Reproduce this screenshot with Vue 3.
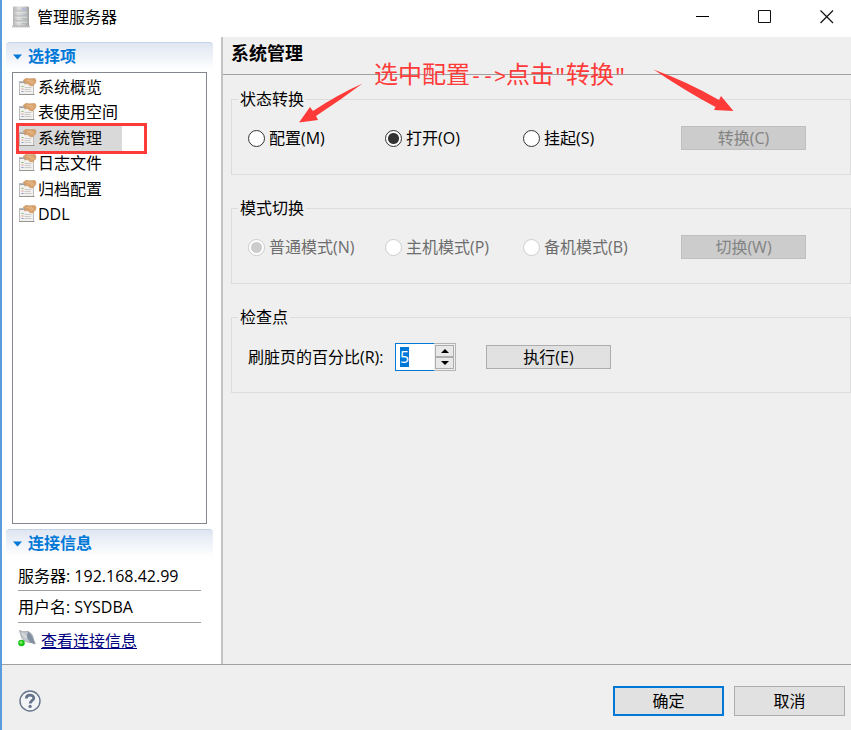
<script setup>
import { onMounted, ref } from 'vue'

const items = ['系统概览', '表使用空间', '系统管理', '日志文件', '归档配置', 'DDL']
const current = ref('系统管理')
const state = ref('O')
const mode = ref('N')
const percent = ref(5)
const percentInput = ref(null)

const states = [
  { key: 'M', label: '配置(M)' },
  { key: 'O', label: '打开(O)' },
  { key: 'S', label: '挂起(S)' }
]
const modes = [
  { key: 'N', label: '普通模式(N)' },
  { key: 'P', label: '主机模式(P)' },
  { key: 'B', label: '备机模式(B)' }
]

function step(delta) {
  percent.value = Math.min(100, Math.max(0, Number(percent.value) + delta))
}

onMounted(() => percentInput.value.select())
</script>

<template>
  <div class="window">
    <header class="titlebar">
      <svg class="app-icon" width="18" height="22" viewBox="0 0 18 22">
        <defs>
          <linearGradient id="metal" x1="0" x2="1">
            <stop offset="0" stop-color="#b4b4b4" />
            <stop offset="0.35" stop-color="#dedede" />
            <stop offset="0.7" stop-color="#c4c6cc" />
            <stop offset="1" stop-color="#a2a2a2" />
          </linearGradient>
        </defs>
        <path d="M0 19.500h18v2H0z" fill="#c9c9c9" />
        <rect x="1" y="0.500" width="16" height="20" rx="1" fill="url(#metal)" />
        <path d="M3 6h12M3 11h12M3 16h12" stroke="#eeeeee" />
        <path d="M3 5h12M3 10h12M3 15h12M3 20h12" stroke="#b2b2b2" />
        <path d="M10 2.500h4M10 3.500h4" stroke="#b9bbd6" />
        <path d="M10 12.500h4M10 17.500h4" stroke="#a9c2a6" />
      </svg>
      <h1>管理服务器</h1>
      <div class="window-buttons">
        <button type="button" aria-label="最小化">
          <svg width="14" height="14" viewBox="0 0 14 14"><path d="M0 6.500h13" stroke="#000" /></svg>
        </button>
        <button type="button" aria-label="最大化">
          <svg width="14" height="14" viewBox="0 0 14 14"><path d="M.5.5h12v12H.5z" fill="none" stroke="#111" /></svg>
        </button>
        <button type="button" aria-label="关闭">
          <svg width="14" height="14" viewBox="0 0 14 14"><path d="M.5.500l12.500 12.500M13 .500L.500 13" stroke="#111" stroke-width="1.200" /></svg>
        </button>
      </div>
    </header>

    <div class="body">
      <aside class="sidebar">
        <h2 class="section-title">
          <svg width="10" height="6" viewBox="0 0 10 6"><path d="M0 .500h9L4.500 5.500z" fill="#0078d7" /></svg>
          <span>选择项</span>
        </h2>
        <nav class="tree">
          <ul>
            <li v-for="item in items" :key="item">
              <button type="button" class="tree-item" :class="{ selected: item === current }" @click="current = item">
                <svg width="18" height="18" viewBox="0 0 18 18">
                  <rect x=".5" y="3.500" width="14" height="13" fill="#f2f1ef" stroke="#bebcb8" />
                  <path d="M0 16.500h15.500" stroke="#979592" />
                  <path d="M1 4.500h5" stroke="#9aa0a8" />
                  <path d="M5.500 9.500h7M5.500 11.500h6M5.500 13.500h7" stroke="#cbcbcb" />
                  <path d="M2.500 8.500h2" stroke="#7fbb70" />
                  <path d="M2.500 11h2" stroke="#dc9085" />
                  <path d="M2.500 13.500h2" stroke="#8296cc" />
                  <path d="M4 2.500L7 .3 10 .8 16 .4 17 2.500 16.500 5 13.500 8 11 7.500 8.500 5.500 5.500 6 6.500 4z" fill="#d9a26c" stroke="#c08b55" stroke-width=".5" />
                  <path d="M8 2.200l3 1 2.500 2.800M11 1.800l3 2 1 1.500" stroke="#ebc496" stroke-width=".8" fill="none" />
                </svg>
                <span>{{ item }}</span>
              </button>
              <span v-if="item === '系统管理'" class="marker"></span>
            </li>
          </ul>
        </nav>

        <h2 class="section-title">
          <svg width="10" height="6" viewBox="0 0 10 6"><path d="M0 .500h9L4.500 5.500z" fill="#0078d7" /></svg>
          <span>连接信息</span>
        </h2>
        <div class="connection">
          <p>服务器: 192.168.42.99</p>
          <p>用户名: SYSDBA</p>
          <a href="#">
            <svg width="18" height="18" viewBox="0 0 18 18">
              <path d="M1.500 .500L5 1.800 10 1.500C13 2.500 15 5.500 15.500 9L17.300 14 13 12.500C8.500 12.500 4 10 3 5.500z" fill="#c3c9cf" stroke="#8f979f" stroke-width=".7" />
              <path d="M9 5c0 3 1 5 3 7.300l5 1.700-1.800-5C14.500 6 12.500 3 10 1.800z" fill="#8390a0" />
              <path d="M4 3.500l4.500 4" stroke="#eef0f2" />
              <circle cx="3.500" cy="13" r="3.300" fill="#19c414" />
              <circle cx="3" cy="12.500" r="1.400" fill="#7cf06b" />
            </svg>
            <span>查看连接信息</span>
          </a>
        </div>
      </aside>

      <main class="content">
        <h2 class="page-title">系统管理</h2>
        <form class="groups" @submit.prevent>
          <fieldset>
            <legend>状态转换</legend>
            <div class="options">
              <label v-for="s in states" :key="s.key">
                <input v-model="state" type="radio" name="state" :value="s.key" />{{ s.label }}
              </label>
              <button type="button" class="btn" disabled>转换(C)</button>
            </div>
          </fieldset>
          <fieldset>
            <legend>模式切换</legend>
            <div class="options">
              <label v-for="m in modes" :key="m.key" class="off">
                <input v-model="mode" type="radio" name="mode" :value="m.key" disabled />{{ m.label }}
              </label>
              <button type="button" class="btn" disabled>切换(W)</button>
            </div>
          </fieldset>
          <fieldset>
            <legend>检查点</legend>
            <div class="checkpoint">
              <label for="percent">刷脏页的百分比(R):</label>
              <div class="spinner">
                <input id="percent" ref="percentInput" v-model="percent" type="text" inputmode="numeric" />
                <div class="steps">
                  <button type="button" aria-label="增加" @click="step(1)">
                    <svg width="8" height="4" viewBox="0 0 8 4"><path d="M0 4l4-4 4 4z" /></svg>
                  </button>
                  <button type="button" aria-label="减少" @click="step(-1)">
                    <svg width="8" height="4" viewBox="0 0 8 4"><path d="M0 0h8L4 4z" /></svg>
                  </button>
                </div>
              </div>
              <button type="button" class="btn">执行(E)</button>
            </div>
          </fieldset>
        </form>

        <div class="annotation">
          <svg class="arrow" width="64" height="40" viewBox="0 0 64 40">
            <path d="M63.500 .500Q38 12 14 28L11 24 0 39.500 19 37 17 33Q40 18 63.500 .500z" fill="#fe3b39" />
          </svg>
          <p>选中配置<span>--&gt;</span>点击<span>"</span>转换<span>"</span></p>
          <svg class="arrow" width="82" height="43" viewBox="0 0 82 43">
            <path d="M.5.500Q35 13 66 31L68 27 80.500 42 61 41 62.500 38Q34 23 .500 .500z" fill="#fe3b39" />
          </svg>
        </div>
      </main>
    </div>

    <footer class="footer">
      <button type="button" class="help" aria-label="帮助">
        <svg width="22" height="22" viewBox="0 0 22 22" fill="none">
          <circle cx="11" cy="11" r="10" fill="#f3f4f6" stroke="#66758c" stroke-width="1.400" />
          <path d="M7.300 8.400C7.300 4 14.800 4.200 14.800 8c0 2.600-3.600 2.700-3.600 5.400" stroke="#66758c" stroke-width="2.800" />
          <circle cx="11.100" cy="16.400" r="1.600" fill="#66758c" />
        </svg>
      </button>
      <button type="button" class="btn primary">确定</button>
      <button type="button" class="btn">取消</button>
    </footer>
  </div>
</template>

<style>
body {
  margin: 0;
}
</style>

<style scoped>
.window {
  box-sizing: border-box;
  min-height: 100vh;
  display: flex;
  flex-direction: column;
  border-left: 2px solid #5a9bdb;
  background: #efefef;
  color: #000;
  font: 16px/20px "Open Sans", "Noto Sans CJK SC", sans-serif;
}
.window * {
  box-sizing: border-box;
}
h1,
h2,
p,
ul {
  margin: 0;
  padding: 0;
  font-size: 16px;
  font-weight: 400;
}
button {
  font: inherit;
  color: inherit;
  padding: 0;
  border: 0;
  background: none;
}
svg {
  display: block;
  flex: none;
}
.titlebar {
  display: flex;
  align-items: center;
  gap: 7px;
  height: 37px;
  padding: 0 1px 3px 10px;
  background: #fff;
}
.window-buttons {
  display: flex;
  margin-left: auto;
}
.window-buttons button {
  display: grid;
  place-items: center;
  width: 62px;
  height: 34px;
}
.window-buttons button:last-child {
  width: 46px;
  margin-left: 8px;
}
.body {
  flex: 1;
  display: flex;
}
.sidebar {
  flex: none;
  width: 221px;
  display: flex;
  flex-direction: column;
  padding: 5px 8px 13px 4px;
  background: #fff;
  border-right: 2px solid #c3c3c3;
}
.section-title {
  display: flex;
  align-items: center;
  gap: 5px;
  height: 28px;
  padding-left: 7px;
  border-top: 1px solid #c3d3e6;
  border-radius: 4px 4px 0 0;
  background: linear-gradient(#dfe6f2, #fff);
  color: #0078d7;
  font-weight: 700;
}
.section-title span {
  padding-bottom: 2px;
}
.tree {
  flex: 1;
  width: 195px;
  margin: 2px 0 5px 6px;
  padding: 1px 3px;
  border: 1px solid #828790;
}
.tree ul {
  display: grid;
  grid-template-rows: repeat(6, 1fr);
  height: 153px;
  list-style: none;
}
.tree li {
  position: relative;
  display: flex;
}
.tree-item {
  display: flex;
  align-items: center;
  gap: 1px;
  padding-left: 3px;
}
.tree-item.selected {
  width: 106px;
  background: #d9d9d9;
}
.marker {
  position: absolute;
  inset: -2px auto -3px 0;
  width: 131px;
  border: 3px solid #fe3b39;
  pointer-events: none;
}
.connection {
  padding: 9px 12px 0 12px;
}
.connection p {
  height: 32px;
  border-bottom: 1px solid #a0a0a0;
  padding-top: 6px;
}
.connection p:first-child {
  height: 25px;
  padding-top: 0;
}
.connection a {
  display: flex;
  gap: 5px;
  padding-top: 7px;
  color: #000080;
}
.connection a span {
  padding-top: 1px;
}
.content {
  position: relative;
  flex: 1;
  min-width: 0;
}
.page-title {
  height: 38px;
  padding: 4px 8px;
  border-bottom: 1px solid #a0a0a0;
  font-size: 18px;
  line-height: 24px;
  font-weight: 700;
}
.groups {
  display: flex;
  flex-direction: column;
  gap: 23px;
  padding: 14px 0 0 8px;
}
fieldset {
  min-width: 0;
  height: 86px;
  margin: 0;
  padding: 0 16px;
  border: 1px solid #dcdcdc;
}
legend {
  margin-left: -10px;
  padding: 0 2px;
}
.options {
  display: grid;
  grid-template-columns: 137px 138px 158px 125px;
  align-items: center;
  padding-top: 17px;
}
.options label {
  display: flex;
  align-items: center;
  gap: 4px;
}
.options .off {
  color: #6d6d6d;
}
input[type="radio"] {
  appearance: none;
  width: 17px;
  height: 17px;
  margin: 0;
  border: 1px solid #333;
  border-radius: 50%;
  background: #fff;
}
input[type="radio"]:checked {
  background: radial-gradient(circle, #333 5px, #fff 6px);
}
input[type="radio"]:disabled {
  border-color: #ccc;
}
input[type="radio"]:disabled:checked {
  background: radial-gradient(circle, #ccc 5px, #fff 6px);
}
.btn {
  width: 125px;
  height: 24px;
  border: 1px solid #adadad;
  background: #e1e1e1;
  text-align: center;
}
.btn:disabled {
  border-color: #bfbfbf;
  background: #ccc;
  color: #838383;
}
.checkpoint {
  display: flex;
  align-items: center;
  padding-top: 16px;
}
.checkpoint label {
  width: 147px;
  white-space: nowrap;
}
.spinner {
  display: flex;
  width: 61px;
  height: 28px;
  margin-right: 30px;
  border: 1px solid #b4b4b4;
  background: #fff;
}
.spinner input {
  width: 39px;
  margin: -1px 0 -1px -1px;
  padding: 0 4px;
  border: 1px solid #0078d7;
  border-right: 0;
  outline: 0;
  font: inherit;
  caret-color: transparent;
}
.spinner input::selection {
  background: #0078d7;
  color: #fff;
}
.steps {
  flex: 1;
  display: grid;
  grid-template-rows: 1fr 1fr;
  padding: 1px;
  background: #efefef;
}
.steps button {
  display: grid;
  place-items: center;
  border: 1px solid #adadad;
  background: #e8e8e8;
}
.footer {
  display: flex;
  align-items: center;
  gap: 10px;
  height: 66px;
  padding: 6px 6px 0 17px;
  border-top: 1px solid #a0a0a0;
}
.help {
  margin-right: auto;
}
.footer .btn {
  width: 111px;
  height: 30px;
}
.footer .primary {
  border: 2px solid #0078d7;
}
.annotation {
  position: absolute;
  top: 22px;
  left: 76px;
  display: flex;
  gap: 11px;
  color: #fe3b39;
  pointer-events: none;
}
.annotation p {
  font-size: 24px;
  line-height: 30px;
  white-space: nowrap;
}
.annotation p span {
  font-family: "Liberation Mono", monospace;
  font-size: 20px;
}
.annotation .arrow:first-child {
  margin-top: 24px;
}
.annotation .arrow:last-child {
  margin: 10px 0 0 16px;
}
</style>
